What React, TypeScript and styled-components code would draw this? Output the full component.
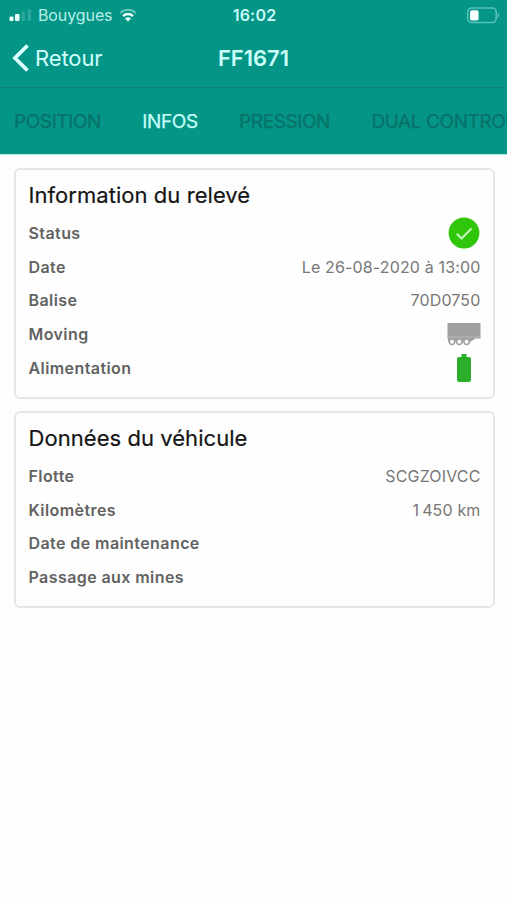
import React from "react";
import styled, { createGlobalStyle } from "styled-components";

const GlobalStyle = createGlobalStyle`
  * { box-sizing: border-box; }
  body {
    margin: 0;
    background: #fefefe;
    font-family: Inter, "Liberation Sans", sans-serif;
    overflow: hidden;
  }
  svg { display: block; flex: none; }
`;

const Screen = styled.div`
  width: 507px;
  height: 900px;
  overflow: hidden;
`;

const Header = styled.header`
  height: 155px;
  background: #049587;
  color: #d9fffb;
  border-bottom: 1px solid #b5efe9;
`;

const StatusBar = styled.div`
  display: grid;
  grid-template-columns: 1fr auto 1fr;
  align-items: center;
  height: 30px;
  padding: 0 7px 0 9px;
`;

const Carrier = styled.div`
  display: flex;
  align-items: center;
  gap: 7px;
  font-size: 16px;
  letter-spacing: -0.1px;
  color: #b4efe8;
`;

const Clock = styled.div`
  font-size: 16px;
  font-weight: 600;
  letter-spacing: 0.2px;
  color: #c8fbf5;
`;

const BatterySlot = styled.div`
  display: flex;
  justify-content: flex-end;
`;

const NavBar = styled.div`
  display: grid;
  grid-template-columns: 1fr auto 1fr;
  align-items: center;
  height: 58px;
  padding: 0 12px 2px;
  border-bottom: 1px solid #0a8378;
`;

const BackButton = styled.button`
  display: flex;
  align-items: center;
  gap: 5px;
  padding: 0;
  border: 0;
  background: none;
  font: inherit;
  font-size: 22px;
  letter-spacing: -0.1px;
  color: #d0fffb;
`;

const NavTitle = styled.h1`
  margin: 0;
  font-size: 22px;
  font-weight: 600;
  letter-spacing: 0;
  color: #c9fff9;
`;

const Tabs = styled.nav`
  display: flex;
  align-items: center;
  gap: 41.4px;
  height: 66px;
  padding-left: 14px;
  overflow: hidden;
`;

const Tab = styled.span<{ $active?: boolean }>`
  flex: none;
  font-size: 19px;
  letter-spacing: -0.4px;
  white-space: nowrap;
  -webkit-text-stroke: 0.25px currentColor;
  color: ${({ $active }) => ($active ? "#c4fff8" : "#087268")};
`;

const Content = styled.main`
  display: flex;
  flex-direction: column;
  gap: 12px;
  padding: 13px 12px 0 14px;
`;

const Card = styled.section<{ $height: number }>`
  height: ${({ $height }) => $height}px;
  padding: 9px 12.5px 0 12.5px;
  border: 2px solid #e6e6e6;
  border-radius: 6px;
  background: #fefefe;
`;

const CardTitle = styled.h2`
  margin: 0 0 5px;
  font-size: 22px;
  line-height: 32px;
  font-weight: 400;
  letter-spacing: 0.05px;
  color: #151515;
  -webkit-text-stroke: 0.2px currentColor;
`;

const Row = styled.div`
  display: flex;
  align-items: center;
  justify-content: space-between;
  height: 33.75px;
`;

const Label = styled.span`
  font-size: 16px;
  font-weight: 600;
  letter-spacing: 0.42px;
  color: #626262;
`;

const Value = styled.span`
  font-size: 16px;
  letter-spacing: 0.15px;
  color: #777;
`;

const IconSlot = styled.span`
  display: flex;
  justify-content: center;
  width: 34px;
`;

const SignalIcon = () => (
  <svg width="22" height="13" viewBox="0 0 22 13">
    <rect x="0.5" y="7.5" width="4" height="4.5" rx="1" fill="#e8fffd" />
    <rect x="6" y="5" width="4.5" height="7" rx="1" fill="#e8fffd" />
    <rect x="12.5" y="2.5" width="3.5" height="9.5" rx="1" fill="#2ba89b" />
    <rect x="18.5" y="0" width="3.5" height="12" rx="1" fill="#2ba89b" />
  </svg>
);

const WifiIcon = () => (
  <svg width="18" height="14" viewBox="0 0 18 14" fill="none">
    <path d="M1.2 5.1C5.6 .6 12.4.6 16.8 5.1" stroke="#69c9bf" strokeWidth="2" />
    <path d="M4 8.1c2.9-2.8 7.1-2.8 10 0" stroke="#e8fffd" strokeWidth="2.3" />
    <path d="M6 10.4c1.8-1.5 4.2-1.5 6 0L9 13.5z" fill="#e8fffd" />
  </svg>
);

const LowBatteryIcon = () => (
  <svg width="34" height="17" viewBox="0 0 34 17">
    <rect x="1.7" y="1" width="28.5" height="14.5" rx="4" fill="none" stroke="#56c2b7" strokeWidth="1.6" />
    <rect x="4" y="3.2" width="8.6" height="10.3" rx="2" fill="#f4ffff" />
    <path d="M31.7 6c2 .8 2 3.8 0 4.6z" fill="#56c2b7" />
  </svg>
);

const BackIcon = () => (
  <svg width="18" height="30" viewBox="0 0 18 30" fill="none">
    <path d="M15.5 2.500 3 15l12.500 12.500" stroke="#dcffff" strokeWidth="3.8" />
  </svg>
);

const CheckIcon = () => (
  <svg width="32" height="32" viewBox="0 0 32 32">
    <circle cx="16" cy="16" r="15.4" fill="#2fc60b" />
    <path d="m8.800 16.800 4.700 4.700L23.500 11.500" fill="none" stroke="#c9f7bb" strokeWidth="2" />
  </svg>
);

const TrailerIcon = () => (
  <svg width="34" height="24" viewBox="0 0 34 24">
    <path d="M.5 1h33v15.500h-5L23 20H1.500L.5 16z" fill="#a0a0a0" />
    <path d="M.5 15h33" stroke="#b8b8b8" strokeWidth="1" />
    {[5, 12.3, 19.6].map((x) => (
      <circle key={x} cx={x} cy="19.800" r="2.700" fill="#fff" stroke="#a0a0a0" strokeWidth="1.500" />
    ))}
  </svg>
);

const PowerIcon = () => (
  <svg width="16" height="30" viewBox="0 0 16 30">
    <path d="M5.500 1h5v3H13q2 0 2 2v21q0 2-2 2H3q-2 0-2-2V6q0-2 2-2h2.500z" fill="#2cae2c" />
  </svg>
);

type Field = { label: string; value?: string; icon?: React.ReactNode };

const reading: Field[] = [
  { label: "Status", icon: <CheckIcon /> },
  { label: "Date", value: "Le 26-08-2020 à 13:00" },
  { label: "Balise", value: "70D0750" },
  { label: "Moving", icon: <TrailerIcon /> },
  { label: "Alimentation", icon: <PowerIcon /> },
];

const vehicle: Field[] = [
  { label: "Flotte", value: "SCGZOIVCC" },
  { label: "Kilomètres", value: "1\u202f450 km" },
  { label: "Date de maintenance" },
  { label: "Passage aux mines" },
];

const InfoCard = ({ title, fields, height }: { title: string; fields: Field[]; height: number }) => (
  <Card $height={height}>
    <CardTitle>{title}</CardTitle>
    {fields.map((f) => (
      <Row key={f.label}>
        <Label>{f.label}</Label>
        {f.value && <Value>{f.value}</Value>}
        {f.icon && <IconSlot>{f.icon}</IconSlot>}
      </Row>
    ))}
  </Card>
);

export default function App() {
  return (
    <Screen>
      <GlobalStyle />
      <Header>
        <StatusBar>
          <Carrier>
            <SignalIcon />
            Bouygues
            <WifiIcon />
          </Carrier>
          <Clock>16:02</Clock>
          <BatterySlot>
            <LowBatteryIcon />
          </BatterySlot>
        </StatusBar>
        <NavBar>
          <BackButton>
            <BackIcon />
            Retour
          </BackButton>
          <NavTitle>FF1671</NavTitle>
        </NavBar>
        <Tabs>
          <Tab>POSITION</Tab>
          <Tab $active>INFOS</Tab>
          <Tab>PRESSION</Tab>
          <Tab>DUAL CONTROL</Tab>
        </Tabs>
      </Header>
      <Content>
        <InfoCard title="Information du relevé" fields={reading} height={231} />
        <InfoCard title="Données du véhicule" fields={vehicle} height={197} />
      </Content>
    </Screen>
  );
}
